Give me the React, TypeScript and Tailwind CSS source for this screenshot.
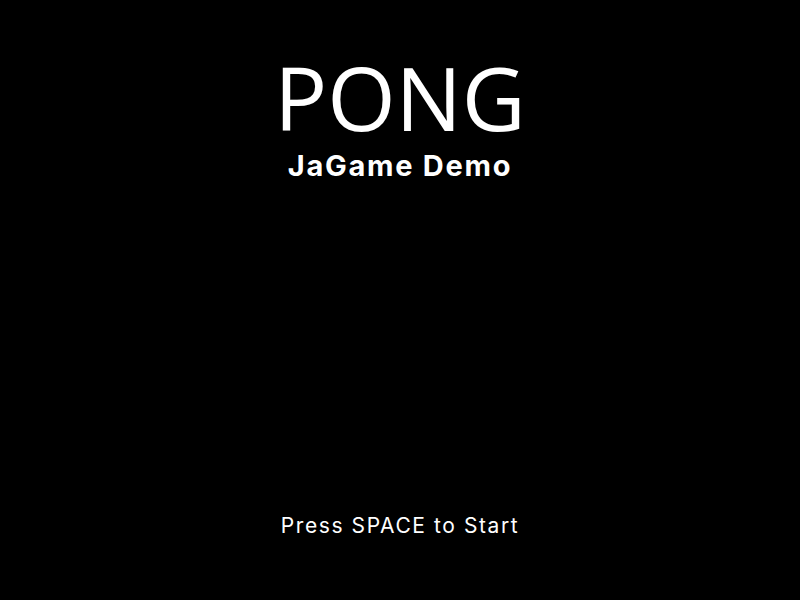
export default function App() {
  return (
    <div className="w-[800px] h-[600px] bg-black text-white flex flex-col items-center font-['Open_Sans',sans-serif]">
      <h1 className="mt-[53px] text-[88px] leading-none font-normal">PONG</h1>
      <h2 className="mt-[10px] text-[29px] leading-none font-bold tracking-[0.06em] font-['Inter',sans-serif]">JaGame Demo</h2>
      <p className="mt-[335px] text-[21px] leading-none tracking-[0.075em] font-['Inter',sans-serif]">Press SPACE to Start</p>
    </div>
  );
}
